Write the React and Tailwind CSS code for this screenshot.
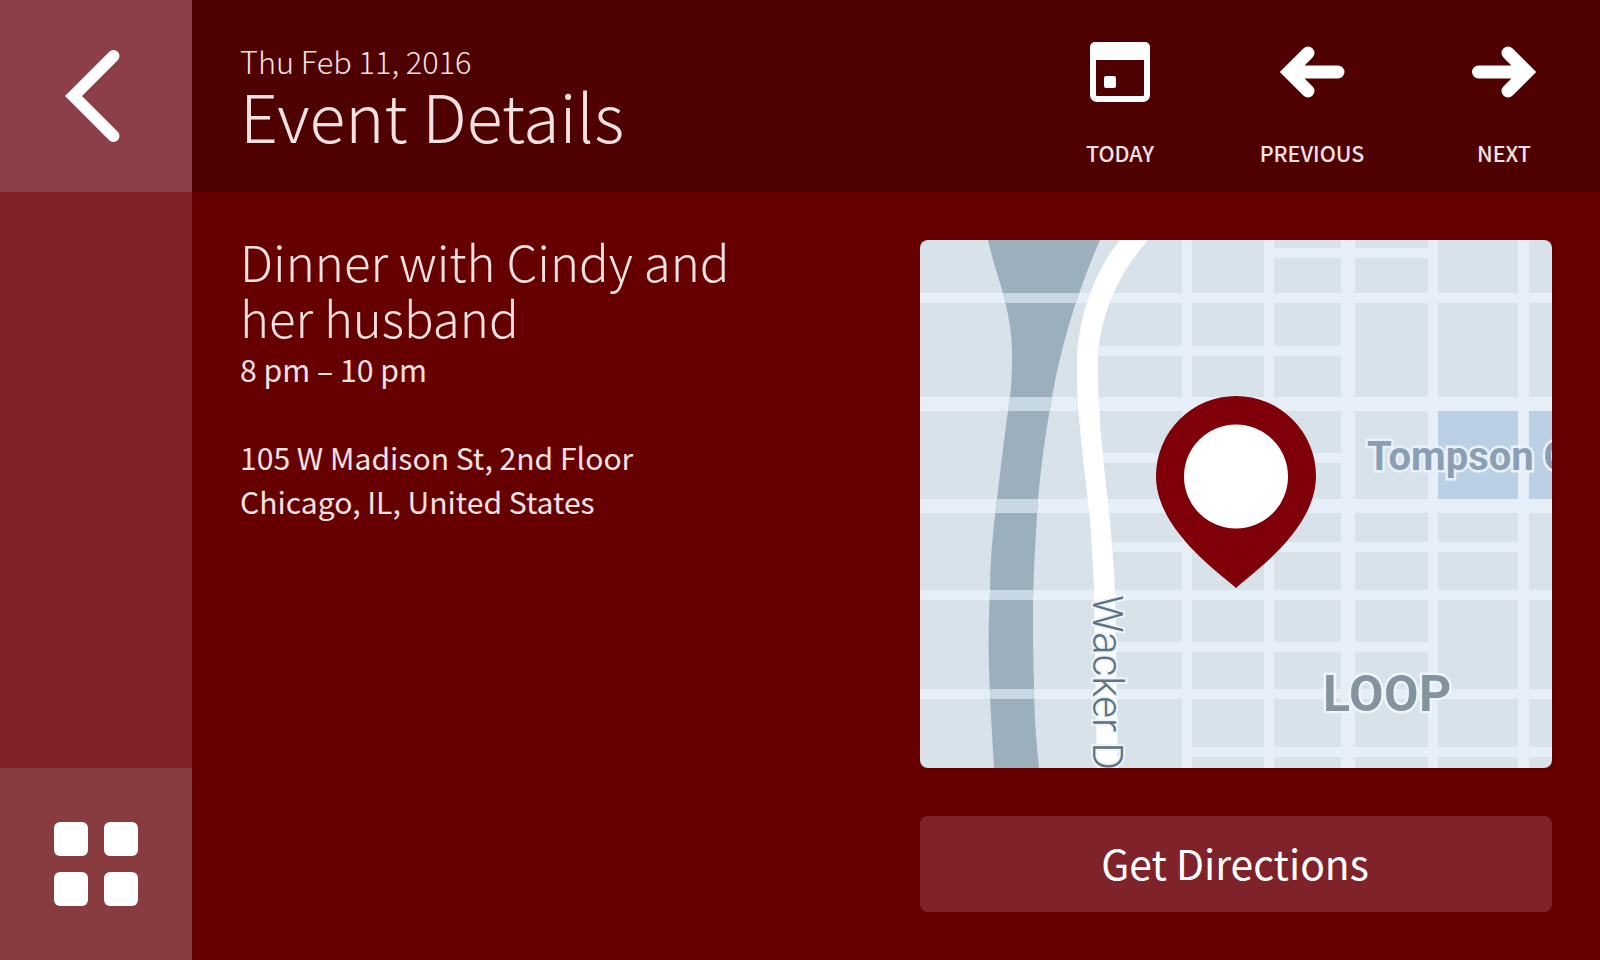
const fontStack = { fontFamily: '"Noto Sans CJK SC", "Noto Sans", sans-serif' };
const mapLabelFont = { fontFamily: 'Roboto, "Noto Sans", sans-serif' };

const hRoads = [
  [0, 53, 632, 10],
  [170, 106, 251, 10],
  [0, 157, 632, 14],
  [170, 213, 251, 10],
  [0, 259, 632, 14],
  [180, 302, 418, 10],
  [0, 350, 632, 10],
  [190, 402, 318, 10],
  [0, 449, 632, 10],
  [262, 507, 370, 10],
  [352, 8, 156, 10],
];

const vRoads = [
  [262, 0, 10, 528],
  [344, 0, 10, 528],
  [421, 0, 14, 528],
  [508, 0, 10, 528],
  [598, 0, 11, 528],
];

const RIVER =
  "M68 0 C72 18 78 36 83 53 C88 72 92 92 92 113 C92 130 92 140 90 157 C85 190 81 225 77 259 C73 290 70 320 70 350 C69 375 68 400 69 427 C70 460 72 495 74 528 L119 528 C116 500 114 470 114 443 C113 415 113 390 113 360 C114 325 116 290 118 259 C121 225 126 190 132 157 C141 105 158 50 180 0 Z";

const STREET =
  "M200 0 C175 30 157 80 157 123 C157 137 157 152 158 167 C161 205 166 243 170 280 C172 305 173 328 174 350 L177 528 L198 528 L195 350 C194 328 192 305 190 280 C186 243 181 205 179 167 C178 152 178 137 178 123 C178 80 197 35 228 0 Z";

function RoadRects({ fill }) {
  return (
    <g fill={fill}>
      {hRoads.map(([x, y, w, h]) => (
        <rect key={`h${x}-${y}`} x={x} y={y} width={w} height={h} />
      ))}
      {vRoads.map(([x, y, w, h]) => (
        <rect key={`v${x}`} x={x} y={y} width={w} height={h} />
      ))}
    </g>
  );
}

function MapPicture() {
  return (
    <svg viewBox="0 0 632 528" className="block w-full h-full">
      <defs>
        <clipPath id="river">
          <path d={RIVER} />
        </clipPath>
      </defs>
      <rect width="632" height="528" fill="#d7e2ea" />
      <rect x="518" y="171" width="80" height="88" fill="#bbd0e5" />
      <rect x="609" y="171" width="23" height="88" fill="#bbd0e5" />
      <RoadRects fill="#e6eff7" />
      <path d={RIVER} fill="#9bafbd" />
      <g clipPath="url(#river)">
        <g fill="#c8d7e4">
          <rect x="0" y="53" width="632" height="10" />
          <rect x="0" y="157" width="632" height="14" />
          <rect x="0" y="259" width="632" height="14" />
          <rect x="0" y="350" width="632" height="10" />
          <rect x="0" y="449" width="632" height="10" />
        </g>
      </g>
      <path d={STREET} fill="#ffffff" />

      <text
        x="173"
        y="355"
        transform="rotate(90 173 355)"
        fontSize="42"
        fontWeight="300"
        fill="#5f7482"
        stroke="#eef4f9"
        strokeWidth="4"
        paintOrder="stroke"
        style={mapLabelFont}
      >
        Wacker Dr
      </text>
      <text
        x="447"
        y="230"
        fontSize="40"
        fontWeight="700"
        fill="#8a9fb4"
        stroke="#e9f1f8"
        strokeWidth="5"
        paintOrder="stroke"
        style={mapLabelFont}
      >
        Tompson Center
      </text>
      <text
        x="403"
        y="471"
        fontSize="50"
        fontWeight="700"
        letterSpacing="0.5"
        fill="#84949f"
        stroke="#eef4f9"
        strokeWidth="5"
        paintOrder="stroke"
        style={mapLabelFont}
      >
        LOOP
      </text>

      <path
        d="M316 348 C300 333 236 290 236 236 A80 80 0 0 1 396 236 C396 290 332 333 316 348 Z"
        fill="#7f0008"
      />
      <circle cx="316" cy="236.5" r="52" fill="#ffffff" />
    </svg>
  );
}

function NavButton({ label, children }) {
  return (
    <button className="w-[192px] h-[192px] relative flex flex-col items-center">
      <svg viewBox="0 0 192 120" className="w-[192px] h-[120px] block">
        {children}
      </svg>
      <span className="absolute top-[138px] text-[21.4px] leading-[30px] font-medium text-[#f4e2e2]">
        {label}
      </span>
    </button>
  );
}

export default function App() {
  return (
    <div className="flex w-[1600px] h-[960px] overflow-hidden bg-[#660000]" style={fontStack}>
      {/* Left rail */}
      <aside className="w-[192px] flex flex-col bg-[#7f2229]">
        <button className="h-[192px] bg-[#8c3f46] flex items-center justify-center">
          <svg viewBox="0 0 192 192" className="w-[192px] h-[192px]">
            <path
              d="M113.5 56 L73.5 96 L113.5 136"
              fill="none"
              stroke="#ffffff"
              strokeWidth="12"
              strokeLinecap="round"
              strokeLinejoin="miter"
            />
          </svg>
        </button>
        <div className="flex-1" />
        <button className="h-[192px] bg-[#883c40] flex items-center justify-center">
          <div className="grid grid-cols-2 gap-4">
            <div className="w-[34px] h-[34px] rounded-md bg-white" />
            <div className="w-[34px] h-[34px] rounded-md bg-white" />
            <div className="w-[34px] h-[34px] rounded-md bg-white" />
            <div className="w-[34px] h-[34px] rounded-md bg-white" />
          </div>
        </button>
      </aside>

      <div className="flex-1 flex flex-col">
        {/* Header */}
        <header className="h-[192px] bg-[#4f0000] flex justify-between pl-[48px]">
          <div className="pt-[41px] text-[#f4e2e2]">
            <p className="text-[30.7px] leading-[40px] font-light">Thu Feb 11, 2016</p>
            <h1 className="text-[66.2px] leading-[72px] font-light -mt-[3px]">Event Details</h1>
          </div>
          <div className="flex">
            <NavButton label="TODAY">
              <rect x="69" y="45" width="54" height="54" rx="4" fill="none" stroke="#fff" strokeWidth="6" />
              <rect x="66" y="42" width="60" height="18" rx="5" fill="#fff" />
              <rect x="80" y="76" width="12" height="12" rx="2" fill="#fff" />
            </NavButton>
            <NavButton label="PREVIOUS">
              <path
                d="M92 53 L73 72 L92 91 M73 72 L122 72"
                fill="none"
                stroke="#fff"
                strokeWidth="13"
                strokeLinecap="round"
                strokeLinejoin="miter"
              />
            </NavButton>
            <NavButton label="NEXT">
              <path
                d="M100 53 L119 72 L100 91 M119 72 L70.5 72"
                fill="none"
                stroke="#fff"
                strokeWidth="13"
                strokeLinecap="round"
                strokeLinejoin="miter"
              />
            </NavButton>
          </div>
        </header>

        {/* Body */}
        <main className="flex-1 flex justify-between pl-[48px] pr-[48px] pt-[41px]">
          <div className="w-[520px] text-[#f4e2e2]">
            <h2 className="text-[49.2px] leading-[56px] font-light">Dinner with Cindy and her husband</h2>
            <p className="text-[30.2px] leading-[40px] font-normal mt-[4px]">8 pm – 10 pm</p>
            <p className="text-[30.1px] leading-[44px] font-normal mt-[46px]">
              105 W Madison St, 2nd Floor
              <br />
              Chicago, IL, United States
            </p>
          </div>
          <div className="w-[632px] flex flex-col gap-[48px] pt-[7px]">
            <div className="h-[528px] rounded-lg overflow-hidden">
              <MapPicture />
            </div>
            <button className="h-[96px] rounded-lg bg-[#7f2229] text-white text-[40.8px] leading-[56px] font-normal pb-[2px] pr-[2px]">
              Get Directions
            </button>
          </div>
        </main>
      </div>
    </div>
  );
}
